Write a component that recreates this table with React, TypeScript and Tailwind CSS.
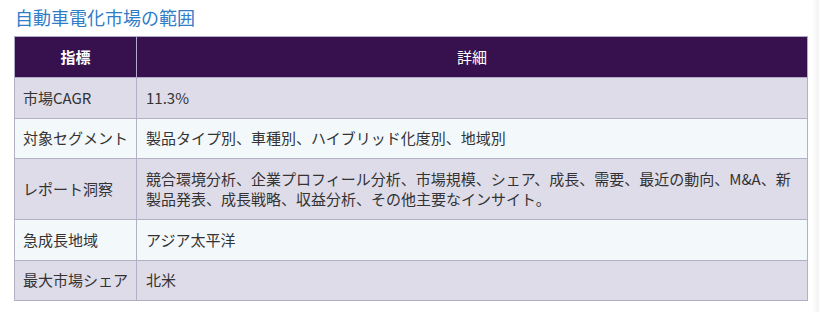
const rows: [string, string][] = [
  ["市場CAGR", "11.3%"],
  ["対象セグメント", "製品タイプ別、車種別、ハイブリッド化度別、地域別"],
  [
    "レポート洞察",
    "競合環境分析、企業プロフィール分析、市場規模、シェア、成長、需要、最近の動向、M&A、新製品発表、成長戦略、収益分析、その他主要なインサイト。",
  ],
  ["急成長地域", "アジア太平洋"],
  ["最大市場シェア", "北米"],
];

export default function App() {
  return (
    <div
      className="flex h-[312px] w-[819px] overflow-hidden bg-white text-[#333]"
      style={{ fontFamily: '"Noto Sans CJK JP", "Noto Sans", sans-serif' }}
    >
      <div className="w-[812px] pl-[14px] pt-[6px]">
        <h2 className="mb-[8px] pl-px text-[18px] leading-[22px] text-[#2f7cc7]">自動車電化市場の範囲</h2>
        <table className="w-[794px] border-collapse text-[15px]">
          <thead>
            <tr className="bg-[#37114d] text-white">
              <th className="h-[41px] w-[122px] border border-[#b3aacb] p-0 text-center font-semibold">指標</th>
              <th className="h-[41px] border border-[#b3aacb] p-0 text-center font-normal">詳細</th>
            </tr>
          </thead>
          <tbody>
            {rows.map(([label, detail], i) => (
              <tr key={label} className={i % 2 === 0 ? "bg-[#dfdcea]" : "bg-[#f3f8fb]"}>
                <td className="border border-[#b3b0c6] py-[9.5px] pl-[8px] pr-[4px] align-middle leading-[20.5px] whitespace-nowrap">
                  {label}
                </td>
                <td className="border border-[#b3b0c6] py-[9.5px] pl-[9px] pr-[8px] align-middle leading-[20.5px]">{detail}</td>
              </tr>
            ))}
          </tbody>
        </table>
      </div>
      <div className="flex-1 bg-gradient-to-r from-white to-[#f2f2f2]" />
    </div>
  );
}
